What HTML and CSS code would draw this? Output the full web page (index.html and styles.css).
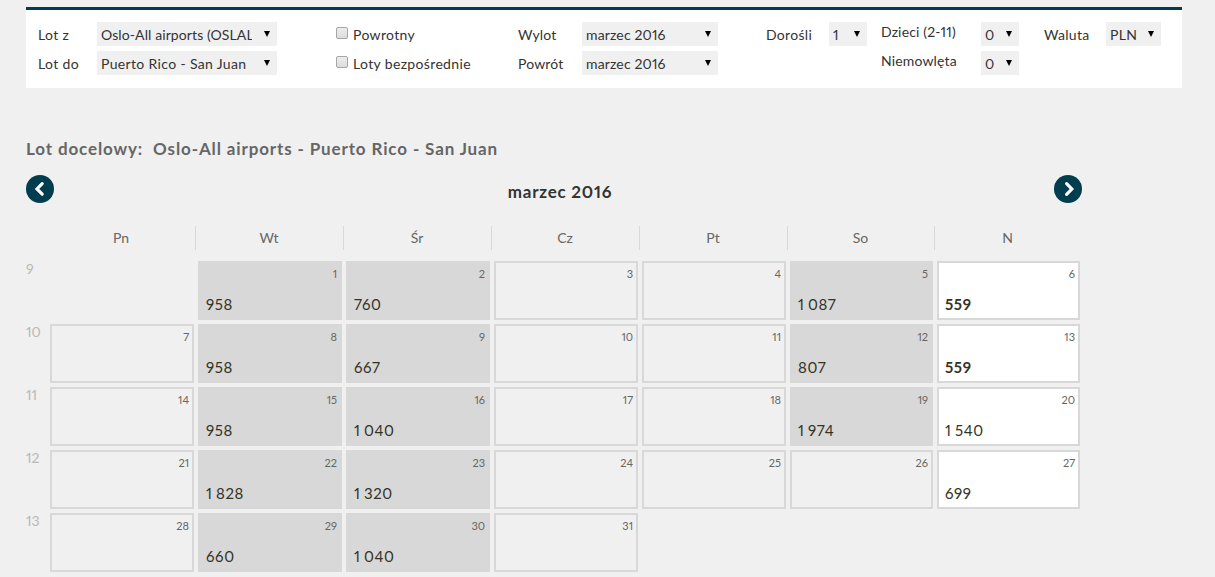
FILE: index.html
```
<!DOCTYPE html>
<html lang="pl">

<head>
    <meta charset="UTF-8">
    <meta name="viewport" content="width=device-width, initial-scale=1.0">
    <title>Kalendarz niskich cen</title>
    <link rel="stylesheet" href="styles.css">
</head>

<body>
    <form class="search">
        <div class="group route">
            <label for="from">Lot z</label>
            <div class="select"><select id="from"><option>Oslo-All airports (OSLALL)</option></select></div>
            <label for="to">Lot do</label>
            <div class="select"><select id="to"><option>Puerto Rico - San Juan</option></select></div>
        </div>
        <div class="group options">
            <label class="check"><input type="checkbox"><span>Powrotny</span></label>
            <label class="check"><input type="checkbox"><span>Loty bezpośrednie</span></label>
        </div>
        <div class="group dates">
            <label for="out">Wylot</label>
            <div class="select"><select id="out"><option>marzec 2016</option></select></div>
            <label for="back">Powrót</label>
            <div class="select"><select id="back"><option>marzec 2016</option></select></div>
        </div>
        <div class="group adults">
            <label for="adults">Dorośli</label>
            <div class="select"><select id="adults"><option>1</option></select></div>
        </div>
        <div class="group children">
            <label for="children">Dzieci (2-11)</label>
            <div class="select"><select id="children"><option>0</option></select></div>
            <label for="infants">Niemowlęta</label>
            <div class="select"><select id="infants"><option>0</option></select></div>
        </div>
        <div class="group currency">
            <label for="currency">Waluta</label>
            <div class="select"><select id="currency"><option>PLN</option></select></div>
        </div>
    </form>

    <main class="results">
        <h1>Lot docelowy:&nbsp; Oslo-All airports - Puerto Rico - San Juan</h1>
        <div class="month">
            <button type="button" class="arrow" aria-label="Poprzedni miesiąc">
                <svg width="28" height="28" viewBox="0 0 28 28"><path d="M16.2 8.6L11 13.9L16.2 19.2"/></svg>
            </button>
            <h2>marzec 2016</h2>
            <button type="button" class="arrow" aria-label="Następny miesiąc">
                <svg width="28" height="28" viewBox="0 0 28 28"><path d="M12.6 8.7L17.8 14L12.6 19.3"/></svg>
            </button>
        </div>

        <div class="row head">
            <div></div>
            <div>Pn</div>
            <div>Wt</div>
            <div>Śr</div>
            <div>Cz</div>
            <div>Pt</div>
            <div>So</div>
            <div>N</div>
        </div>
        <div class="row">
            <div class="week">9</div>
            <div></div>
            <div class="day busy"><span>1</span><b>958</b></div>
            <div class="day busy"><span>2</span><b>760</b></div>
            <div class="day"><span>3</span></div>
            <div class="day"><span>4</span></div>
            <div class="day busy"><span>5</span><b>1 087</b></div>
            <div class="day open low"><span>6</span><b>559</b></div>
        </div>
        <div class="row">
            <div class="week">10</div>
            <div class="day"><span>7</span></div>
            <div class="day busy"><span>8</span><b>958</b></div>
            <div class="day busy"><span>9</span><b>667</b></div>
            <div class="day"><span>10</span></div>
            <div class="day"><span>11</span></div>
            <div class="day busy"><span>12</span><b>807</b></div>
            <div class="day open low"><span>13</span><b>559</b></div>
        </div>
        <div class="row">
            <div class="week">11</div>
            <div class="day"><span>14</span></div>
            <div class="day busy"><span>15</span><b>958</b></div>
            <div class="day busy"><span>16</span><b>1 040</b></div>
            <div class="day"><span>17</span></div>
            <div class="day"><span>18</span></div>
            <div class="day busy"><span>19</span><b>1 974</b></div>
            <div class="day open"><span>20</span><b>1 540</b></div>
        </div>
        <div class="row">
            <div class="week">12</div>
            <div class="day"><span>21</span></div>
            <div class="day busy"><span>22</span><b>1 828</b></div>
            <div class="day busy"><span>23</span><b>1 320</b></div>
            <div class="day"><span>24</span></div>
            <div class="day"><span>25</span></div>
            <div class="day"><span>26</span></div>
            <div class="day open"><span>27</span><b>699</b></div>
        </div>
        <div class="row">
            <div class="week">13</div>
            <div class="day"><span>28</span></div>
            <div class="day busy"><span>29</span><b>660</b></div>
            <div class="day busy"><span>30</span><b>1 040</b></div>
            <div class="day"><span>31</span></div>
        </div>
    </main>
</body>

</html>
```
FILE: styles.css
```
* {
    margin: 0;
    padding: 0;
    box-sizing: border-box;
}

body {
    padding: 7px 0 0 26px;
    background: #f0f0f0;
    color: #333;
    font-family: Lato, "Liberation Sans", sans-serif;
    font-size: 14px;
    font-variant-numeric: proportional-nums;
    overflow: hidden;
}

.search {
    display: flex;
    align-items: flex-start;
    width: 1156px;
    height: 81px;
    padding: 12px 0 0 12px;
    border-top: 3px solid #003d4f;
    background: #fff;
    letter-spacing: 0.3px;
}

.group {
    display: grid;
    grid-auto-rows: 24px;
    row-gap: 5px;
    line-height: 26px;
    white-space: nowrap;
}

.route {
    grid-template-columns: 59px 180px;
    margin-right: 59px;
    letter-spacing: 0.35px;
}

.options {
    width: 182px;
    letter-spacing: 0.35px;
}

.dates {
    grid-template-columns: 64px 136px;
    margin-right: 48px;
    letter-spacing: 0.15px;
}

.adults {
    grid-template-columns: 63px 38px;
    margin-right: 14px;
}

.children {
    grid-template-columns: 100px 38px;
    margin-right: 25px;
    letter-spacing: 0.15px;
}

.children label {
    line-height: 20px;
}

.currency {
    grid-template-columns: 62px 55px;
}

.select {
    position: relative;
    background: #f0f0f0;
}

.select::after {
    content: "";
    position: absolute;
    top: 9px;
    right: 7px;
    border: 3px solid transparent;
    border-top: 6px solid #000;
    border-bottom: 0;
}

select {
    display: block;
    width: 100%;
    height: 24px;
    padding: 0 24px 2px 4px;
    border: 0;
    background: none;
    color: #333;
    font: inherit;
    letter-spacing: inherit;
    appearance: none;
}

#from {
    padding-right: 25px;
    letter-spacing: 0.1px;
}

.check {
    display: flex;
}

.check input {
    width: 12px;
    height: 12px;
    margin: 5px 5px 0 0;
    border: 1px solid #a6a6a6;
    border-radius: 2px;
    background: linear-gradient(#ededed, #dcdcdc);
    appearance: none;
}

.results {
    width: 1056px;
    margin-top: 51px;
}

h1 {
    height: 36px;
    color: #666;
    font-size: 17px;
    line-height: 20px;
    letter-spacing: 0.87px;
}

.month {
    display: flex;
    justify-content: space-between;
    height: 51px;
}

h2 {
    margin-left: 12px;
    font-size: 17px;
    line-height: 34px;
    letter-spacing: 0.75px;
}

.arrow {
    width: 28px;
    height: 28px;
    border: 0;
    border-radius: 50%;
    background: #003d4f;
}

.arrow svg {
    display: block;
    fill: none;
    stroke: #fff;
    stroke-width: 3.2;
    stroke-linecap: round;
}

.row {
    display: grid;
    grid-template-columns: 22px repeat(5, 148px) repeat(2, 147px);
    height: 63px;
}

.head {
    height: 24px;
    margin-bottom: 9px;
    color: #666;
    line-height: 23px;
    text-align: center;
}

.head div {
    padding-right: 1px;
    border-right: 1px solid #d8d8d8;
}

.head div:first-child,
.head div:last-child {
    border-color: transparent;
}

.week {
    padding-top: 1px;
    color: #b8b8b8;
    line-height: 17px;
}

.day {
    display: flex;
    flex-direction: column;
    justify-content: space-between;
    margin: 2px;
    padding: 4px 3px 5px 6px;
    border: 2px solid #d8d8d8;
}

.day span {
    color: #666;
    font-size: 11px;
    line-height: 14px;
    text-align: right;
}

.day b {
    color: #333326;
    font-size: 15px;
    font-weight: normal;
    line-height: 18px;
    letter-spacing: 0.6px;
    word-spacing: -1px;
}

.busy {
    background: #d8d8d8;
}

.open {
    background: #fff;
}

.low b {
    font-weight: bold;
}
```
